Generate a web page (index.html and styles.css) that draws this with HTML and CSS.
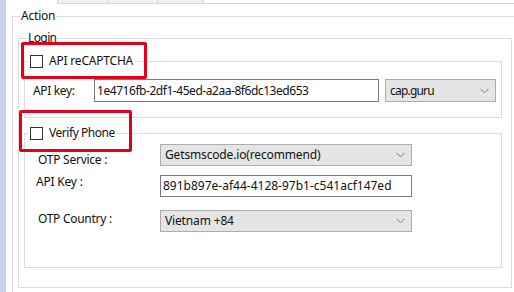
FILE: index.html
```html
<!DOCTYPE html>
<html>
<head>
<meta charset="utf-8">
<link rel="stylesheet" href="styles.css">
</head>
<body>
<div class="screen">
  <div class="strip"></div>
  <div class="main">
    <div class="tabs"><span class="tab t1"></span><span class="tab t2"></span><span class="tab t3"></span></div>
    <fieldset class="group action">
      <legend class="legend action-legend">Action</legend>
      <fieldset class="group login">
        <legend class="legend login-legend">Login</legend>
        <fieldset class="group sub captcha">
          <legend class="check-legend captcha-legend"><span class="checkbox"></span><span class="check-text captcha-text">API reCAPTCHA</span></legend>
          <div class="key-row">
            <span class="key-label">API key:</span>
            <div class="input key-input">1e4716fb-2df1-45ed-a2aa-8f6dc13ed653</div>
            <div class="combo key-combo"><span class="guru">cap.guru</span><svg class="chev" width="9" height="6" viewBox="0 0 9 6"><path d="M0.5 0.8 L4.5 4.8 L8.5 0.8" fill="none" stroke="#7a7a7a" stroke-width="1"/></svg></div>
          </div>
        </fieldset>
        <fieldset class="group sub phone">
          <legend class="check-legend phone-legend"><span class="checkbox"></span><span class="check-text phone-text">Verify Phone</span></legend>
          <div class="form-row r1">
            <span class="form-label l1">OTP Service :</span>
            <div class="combo wide-combo"><span class="service">Getsmscode.io(recommend)</span><svg class="chev" width="9" height="6" viewBox="0 0 9 6"><path d="M0.5 0.8 L4.5 4.8 L8.5 0.8" fill="none" stroke="#7a7a7a" stroke-width="1"/></svg></div>
          </div>
          <div class="form-row r2">
            <span class="form-label l2">API Key :</span>
            <div class="input wide-input">891b897e-af44-4128-97b1-c541acf147ed</div>
          </div>
          <div class="form-row r3">
            <span class="form-label l3">OTP Country :</span>
            <div class="combo wide-combo"><span class="country">Vietnam +84</span><svg class="chev" width="9" height="6" viewBox="0 0 9 6"><path d="M0.5 0.8 L4.5 4.8 L8.5 0.8" fill="none" stroke="#7a7a7a" stroke-width="1"/></svg></div>
          </div>
        </fieldset>
      </fieldset>
    </fieldset>
  </div>
</div>
</body>
</html>
```
FILE: styles.css
```css
* { box-sizing: border-box; }
html, body { margin: 0; padding: 0; }
body {
  width: 514px;
  height: 292px;
  overflow: hidden;
  background: #ffffff;
  font-family: "Noto Sans", "Open Sans", sans-serif;
  font-size: 12px;
  line-height: 16px;
  letter-spacing: -0.3px;
  color: #111;
}
.screen { display: flex; width: 514px; height: 292px; overflow: hidden; }
.strip { flex: 0 0 6px; background: #c3d4ec; }
.main { flex: 1; min-width: 0; }

.tabs {
  display: flex;
  height: 4px;
  margin-left: 51px;
  border-bottom: 1px solid #d6d6d6;
}
.tab { height: 3px; background: #f0f0f0; border-left: 1px solid #d6d6d6; }
.t1 { width: 50px; }
.t2 { width: 50px; }
.t3 { width: 47px; border-right: 1px solid #d6d6d6; }

.group {
  margin: 0;
  border: 1px solid #dcdcdc;
  min-width: 0;
}
.legend { padding: 0 1px; line-height: 16px; }

.action {
  margin: 4px 0 0 6px;
  width: 540px;
  height: 300px;
  padding: 6px 0 0 5px;
}
.action-legend { margin-left: 2px; letter-spacing: -0.2px; }

.login {
  width: 494px;
  padding: 7px 9px 19px 5px;
}
.login-legend { margin-left: 3px; letter-spacing: -0.6px; }

.sub { width: 478px; }
.captcha { padding: 10px 4px 15px 8px; }
.phone { margin-top: 7px; padding: 3px 0 35px 0; }

.check-legend {
  position: relative;
  display: flex;
  align-items: center;
  height: 16px;
  padding: 0 2px 0 1px;
}
.captcha-legend { margin-left: -4px; }
.phone-legend { margin-left: 4px; }
.captcha-text { letter-spacing: -0.2px; }
.phone-text { letter-spacing: -0.45px; }
.checkbox {
  width: 13px;
  height: 13px;
  border: 1px solid #333333;
  background: #fff;
  margin-right: 6px;
  margin-top: 1px;
}
.check-legend::after {
  content: "";
  position: absolute;
  border: 3px solid #e2001a;
  border-radius: 2px;
}
.captcha-legend::after { left: -8px; top: -11px; width: 120px; height: 31px; }
.phone-legend::after { left: -10px; top: -15px; width: 107px; height: 36px; }

.key-row { display: flex; align-items: center; height: 23px; }
.key-label { width: 61px; letter-spacing: -0.35px; }
.input {
  background: #fff;
  border: 1px solid #7a7a7a;
  display: flex;
  align-items: center;
  padding-left: 2px;
  white-space: nowrap;
  overflow: hidden;
}
.combo {
  background: #e5e5e5;
  border: 1px solid #adadad;
  display: flex;
  align-items: center;
  justify-content: space-between;
  padding: 0 6px 0 4px;
  white-space: nowrap;
}
.chev { display: block; flex: none; }
.key-input { width: 285px; height: 23px; letter-spacing: -0.45px; }
.key-combo { width: 111px; height: 23px; margin-left: 6px; }
.guru { letter-spacing: -0.8px; }
.service { letter-spacing: -0.15px; }
.country { letter-spacing: -0.15px; }

.form-row { display: flex; align-items: flex-start; }
.r2 { margin-top: 7px; }
.r3 { margin-top: 13px; }
.form-label { width: 135px; }
.l1 { padding-left: 13px; margin-top: 8px; letter-spacing: -0.25px; }
.l2 { padding-left: 11px; margin-top: -1px; letter-spacing: -0.2px; }
.l3 { padding-left: 13px; margin-top: 1px; letter-spacing: -0.28px; }
.wide-combo { width: 252px; height: 22px; }
.wide-input { width: 252px; height: 22px; letter-spacing: 0; padding-left: 2px; }
```
